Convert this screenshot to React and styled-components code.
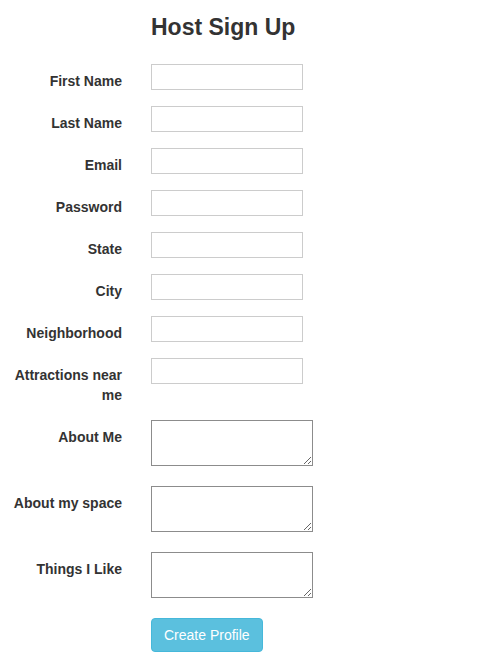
import React from "react";
import styled, { createGlobalStyle } from "styled-components";

const Global = createGlobalStyle`
  html, body { margin: 0; padding: 0; background: #fff; }
  body { font-family: "Liberation Sans", Arial, Helvetica, sans-serif; font-size: 14px; line-height: 20px; color: #333; }
  * { box-sizing: border-box; }
`;

const Page = styled.div`
  padding: 14px 0 0 13px;
`;

const Title = styled.h3`
  margin: 0 0 24px 138px;
  font-size: 23px;
  line-height: 26px;
  font-weight: 700;
  color: #333;
`;

const Form = styled.form`
  display: flex;
  flex-direction: column;
`;

const Group = styled.div`
  display: grid;
  grid-template-columns: 109px auto;
  column-gap: 29px;
  align-items: start;
  margin-bottom: 15px;
`;

const Label = styled.label`
  padding-top: 7px;
  font-weight: 700;
  text-align: right;
  line-height: 20px;
  color: #333;
`;

const Input = styled.input`
  display: block;
  width: 152px;
  height: 26px;
  border: 1px solid #ccc;
  border-radius: 0;
  padding: 2px 4px;
  font: inherit;
  background: #fff;
`;

const TextArea = styled.textarea`
  display: block;
  width: 162px;
  height: 46px;
  margin: 0 0 5px;
  border: 1px solid #8c8c8c;
  border-radius: 0;
  padding: 2px;
  font: 13px "Liberation Mono", monospace;
  background: #fff;
`;

const Button = styled.button`
  grid-column: 2;
  justify-self: start;
  padding: 6px 12px;
  font: 14px/20px "Liberation Sans", Arial, sans-serif;
  color: #fff;
  background: #5bc0de;
  border: 1px solid #46b8da;
  border-radius: 4px;
  cursor: pointer;
`;

const inputs = ["First Name", "Last Name", "Email", "Password", "State", "City", "Neighborhood", "Attractions near me"];
const areas = ["About Me", "About my space", "Things I Like"];

export default function App() {
  return (
    <>
      <Global />
      <Page>
        <Title>Host Sign Up</Title>
        <Form onSubmit={(e) => e.preventDefault()}>
          {inputs.map((l) => (
            <Group key={l}>
              <Label>{l}</Label>
              <Input type={l === "Password" ? "password" : "text"} />
            </Group>
          ))}
          {areas.map((l) => (
            <Group key={l}>
              <Label>{l}</Label>
              <TextArea />
            </Group>
          ))}
          <Group>
            <Button type="submit">Create Profile</Button>
          </Group>
        </Form>
      </Page>
    </>
  );
}
